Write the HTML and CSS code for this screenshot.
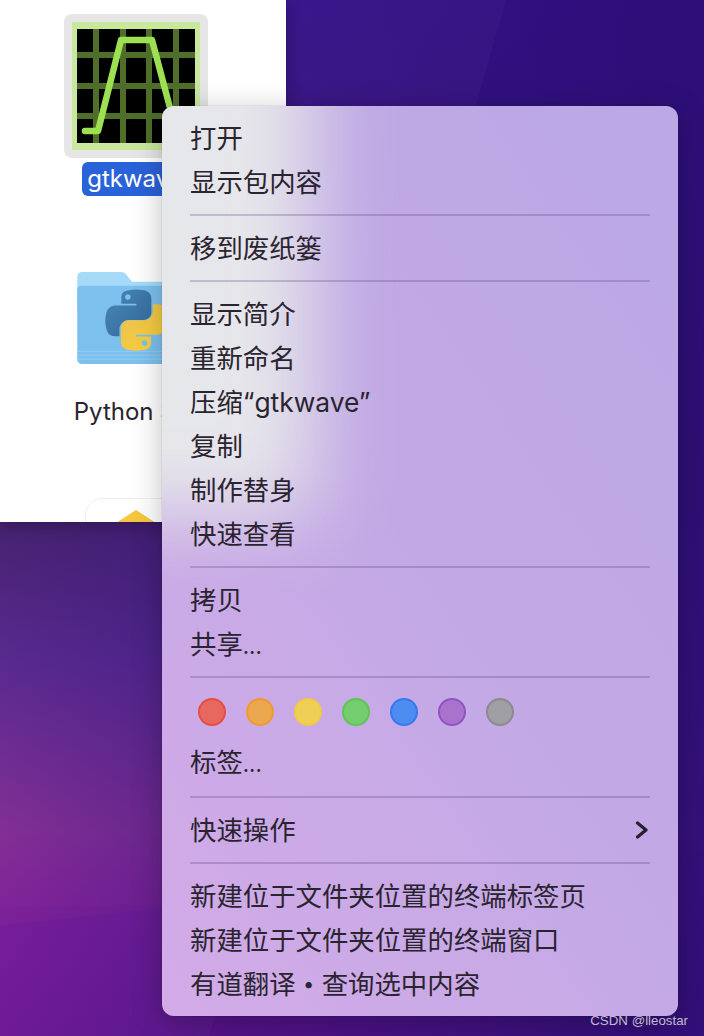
FILE: index.html
```html
<!DOCTYPE html>
<html lang="zh-CN">
<head>
    <meta charset="UTF-8">
    <meta name="viewport" content="width=device-width, initial-scale=1.0">
    <title>gtkwave 右键菜单</title>
    <link rel="stylesheet" href="styles.css">
</head>
<body>
    <div class="desktop">
        <!-- Finder 窗口 -->
        <div class="finder">
            <div class="file file-app">
                <svg class="app-icon" width="144" height="144" viewBox="0 0 144 144">
                    <rect width="144" height="144" rx="8" fill="#e6e6e6"/>
                    <rect x="8" y="8" width="128" height="128" fill="#c9e89e"/>
                    <rect x="13" y="15" width="118" height="114" fill="#000"/>
                    <path d="M32 15V129M59 15V129M85 15V129M112 15V129M13 41H131M13 72H131M13 102H131" stroke="#4f6e2a" stroke-width="6" fill="none"/>
                    <path d="M21 117H34L57 26H88L114 124" stroke="#9de152" stroke-width="6.5" stroke-linecap="round" stroke-linejoin="round" fill="none"/>
                </svg>
                <span class="file-name selected">gtkwave</span>
            </div>

            <div class="file file-folder">
                <svg class="folder-icon" width="118" height="94" viewBox="0 0 120 96">
                    <defs>
                        <linearGradient id="pyBlue" x1="0" y1="0" x2="1" y2="1">
                            <stop offset="0" stop-color="#4a86b8"/>
                            <stop offset="1" stop-color="#306998"/>
                        </linearGradient>
                        <linearGradient id="pyYellow" x1="0" y1="0" x2="1" y2="1">
                            <stop offset="0" stop-color="#ffd43b"/>
                            <stop offset="1" stop-color="#e8bd4f"/>
                        </linearGradient>
                        <path id="snake" fill-rule="evenodd" d="M54.9 0C50.3 0 45.9.4 42 1.1 30.5 3.1 28.4 7.4 28.4 15.2V25.6H55.6V29H18.2C10.3 29 3.4 33.8 1.2 42.8-1.3 53.2-1.4 59.7 1.2 70.5 3.2 78.6 7.7 84.3 15.6 84.3H25V71.9C25 62.9 32.7 55 42 55H69.2C76.8 55 82.8 48.8 82.8 41.2V15.2C82.8 7.8 76.6 2.3 69.2 1.1 64.5.3 59.6 0 54.9 0ZM40.2 8.4C43 8.4 45.3 10.7 45.3 13.6 45.3 16.4 43 18.7 40.2 18.7 37.4 18.7 35.1 16.4 35.1 13.6 35.1 10.7 37.4 8.4 40.2 8.4Z"/>
                    </defs>
                    <path d="M5 1H44C48 1 50 3 52 6L56 11H114C117 11 119 13 119 16V40H0V6C0 3 2 1 5 1Z" fill="#a5dbf8"/>
                    <path d="M4 15H116C119 15 120 17 120 19V90C120 93 118 95 115 95H5C2 95 0 93 0 90V19C0 17 1 15 4 15Z" fill="#7cc1ee"/>
                    <path d="M0 82H120M0 86H120M0 90H120" stroke="#92cef2" stroke-width="1" fill="none"/>
                    <g transform="translate(29 19) scale(.564)">
                        <use href="#snake" fill="url(#pyBlue)"/>
                        <use href="#snake" fill="url(#pyYellow)" transform="rotate(180 55.3 55.3)"/>
                    </g>
                </svg>
                <span class="file-name">Python 3.9</span>
            </div>

            <div class="file file-sketch">
                <svg width="102" height="30" viewBox="0 0 102 30">
                    <path d="M.5 30V18C.5 8 8 .5 18 .5H84C94 .5 101.500 8 101.500 18V30" fill="#fff" stroke="#efefef"/>
                    <path d="M31 25L51 12L71 25V30H31Z" fill="#f5c63f"/>
                </svg>
            </div>
        </div>

        <!-- 右键菜单 -->
        <div class="menu">
            <div class="menu-item">打开</div>
            <div class="menu-item">显示包内容</div>
            <div class="separator"></div>
            <div class="menu-item">移到废纸篓</div>
            <div class="separator"></div>
            <div class="menu-item">显示简介</div>
            <div class="menu-item">重新命名</div>
            <div class="menu-item">压缩“gtkwave”</div>
            <div class="menu-item">复制</div>
            <div class="menu-item">制作替身</div>
            <div class="menu-item">快速查看</div>
            <div class="separator"></div>
            <div class="menu-item">拷贝</div>
            <div class="menu-item">共享<span class="dots">...</span></div>
            <div class="separator"></div>
            <div class="tags">
                <span class="tag tag-red"></span>
                <span class="tag tag-orange"></span>
                <span class="tag tag-yellow"></span>
                <span class="tag tag-green"></span>
                <span class="tag tag-blue"></span>
                <span class="tag tag-purple"></span>
                <span class="tag tag-gray"></span>
            </div>
            <div class="menu-item">标签<span class="dots">...</span></div>
            <div class="separator separator-low"></div>
            <div class="menu-item has-arrow">
                快速操作
                <svg width="14" height="18" viewBox="0 0 14 18">
                    <path d="M2.5 2L11 9L2.500 16" stroke="#26202c" stroke-width="3.2" fill="none" stroke-linecap="round" stroke-linejoin="round"/>
                </svg>
            </div>
            <div class="separator"></div>
            <div class="menu-item">新建位于文件夹位置的终端标签页</div>
            <div class="menu-item">新建位于文件夹位置的终端窗口</div>
            <div class="menu-item">有道翻译 <span class="bullet">•</span> 查询选中内容</div>
        </div>

        <div class="watermark">CSDN @lleostar</div>
    </div>
</body>
</html>
```

FILE: styles.css
```css
html, body {
    margin: 0;
    padding: 0;
}

body {
    font-family: Inter, "Noto Sans CJK SC", sans-serif;
    color: #2a2430;
}

.desktop {
    position: relative;
    width: 704px;
    height: 1036px;
    overflow: hidden;
    background:
        linear-gradient(106deg, rgba(255, 255, 255, .025) 50.5%, rgba(255, 255, 255, 0) 50.6%),
        linear-gradient(90deg, rgba(44, 14, 118, 0) 0%, rgba(44, 14, 118, .3) 23%, rgba(44, 14, 118, .9) 92%),
        linear-gradient(174deg, rgba(104, 18, 152, 0) 83.3%, rgba(104, 18, 152, .3) 83.4%),
        linear-gradient(179deg, rgba(104, 18, 152, 0) 86.5%, rgba(104, 18, 152, .15) 86.6%),
        linear-gradient(180deg, #3d1499 0, #401c68 500px, #54258c 660px, #7f2a92 830px, #7f1f97 900px, #6e1692 1036px);
}

/* Finder 窗口 */
.finder {
    position: absolute;
    left: 0;
    top: 0;
    width: 286px;
    height: 522px;
    overflow: hidden;
    background-color: #fff;
    box-shadow: 0 2px 16px rgba(0, 0, 0, .3);
}

.file {
    display: flex;
    flex-direction: column;
    align-items: center;
    width: 272px;
}

.file-app {
    padding-top: 14px;
}

.file-folder {
    padding-top: 75px;
}

.file-sketch {
    padding-top: 68px;
}

.app-icon,
.folder-icon {
    display: block;
}

.file-name {
    font-size: 24px;
    line-height: 34px;
    white-space: nowrap;
}

.file-app .file-name {
    margin-top: 4px;
}

.file-folder .file-name {
    margin-top: 29px;
    margin-right: 2px;
    line-height: 36px;
}

.selected {
    padding: 0 7px 0 5px;
    color: #fff;
    background-color: #2a62d9;
    border-radius: 6px;
}

/* 右键菜单 */
.menu {
    position: absolute;
    z-index: 0;
    left: 162px;
    top: 106px;
    width: 516px;
    box-sizing: border-box;
    padding: 10px 28px;
    overflow: hidden;
    border-radius: 12px;
    font-size: 26.4px;
    background: linear-gradient(235deg, #bba8e5 0%, #c2a9e5 50%, #d3abe8 100%);
    box-shadow: 0 0 1px rgba(0, 0, 0, .45), 0 6px 30px rgba(0, 0, 0, .25);
}

/* 窗口透过菜单的模糊白色 */
.menu::before {
    content: "";
    position: absolute;
    z-index: -1;
    left: -120px;
    top: -120px;
    width: 270px;
    height: 530px;
    background-color: #e6e7ea;
    filter: blur(40px);
}

.menu-item {
    height: 44px;
    line-height: 45px;
    white-space: nowrap;
}

.dots {
    font-size: 22px;
}

.bullet {
    position: relative;
    top: -3px;
    font-size: 20px;
}

.has-arrow {
    display: flex;
    justify-content: space-between;
}

.has-arrow svg {
    align-self: center;
    margin-right: 1px;
}

.separator {
    height: 2px;
    margin: 10px 0;
    background-color: rgba(80, 50, 120, .25);
}

.separator-low {
    margin: 12px 0 10px;
}

.tags {
    display: flex;
    gap: 20px;
    height: 28px;
    padding: 10px 8px 14px;
}

.tag {
    box-sizing: border-box;
    width: 28px;
    height: 28px;
    border-radius: 50%;
    border: 2px solid;
}

.tag-red { background-color: #e8685f; border-color: #e64e45; }
.tag-orange { background-color: #eba750; border-color: #ee9a34; }
.tag-yellow { background-color: #efcf55; border-color: #f1c945; }
.tag-green { background-color: #74cd6e; border-color: #5fc454; }
.tag-blue { background-color: #4e8cf0; border-color: #3578f0; }
.tag-purple { background-color: #a973cd; border-color: #9252c4; }
.tag-gray { background-color: #9f9ea3; border-color: #8b8a8e; }

.watermark {
    position: absolute;
    right: 16px;
    bottom: 8px;
    font-family: "Liberation Sans", sans-serif;
    font-size: 13.3px;
    color: #c4bcc8;
}
```
